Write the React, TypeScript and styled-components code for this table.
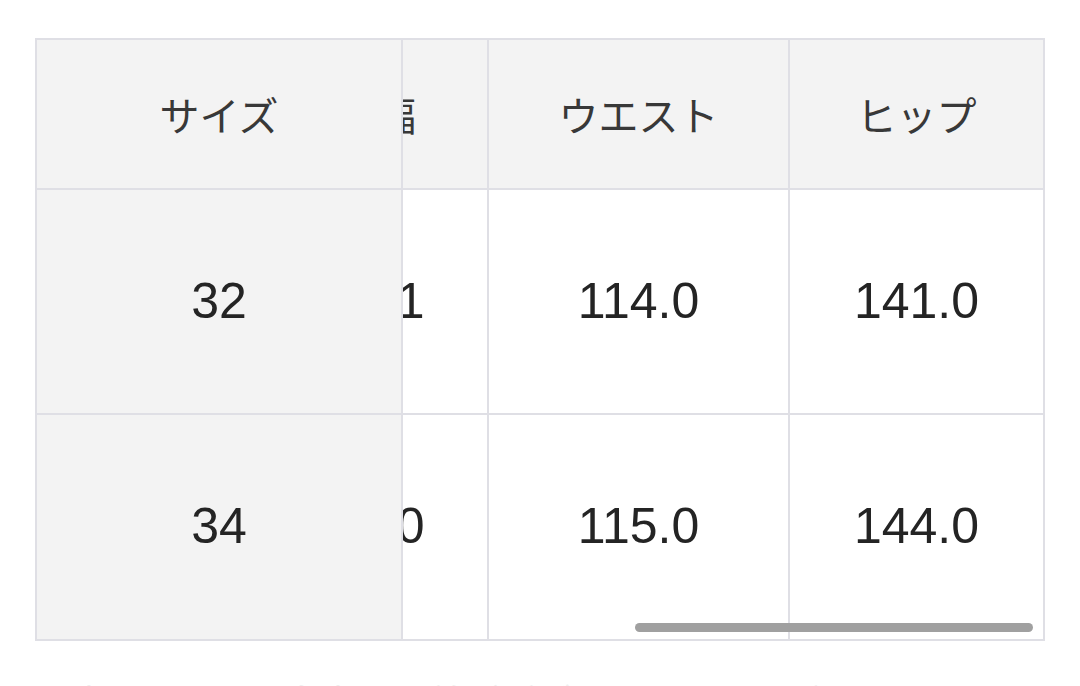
import React, { useLayoutEffect, useRef, useState } from "react"
import styled, { createGlobalStyle } from "styled-components"

const GlobalStyle = createGlobalStyle`
  html, body {
    margin: 0;
    padding: 0;
    background: #ffffff;
  }
  body {
    font-family: "Liberation Sans", "Noto Sans CJK JP", sans-serif;
    color: #2b2b2b;
  }
`

type Column = {
  label: string
  width: number
  values: string[]
}

const sizes = ["32", "34"]

const columns: Column[] = [
  { label: "総丈", width: 272, values: ["104.0", "106.0"] },
  { label: "股上", width: 272, values: ["36.0", "37.0"] },
  { label: "股下", width: 272, values: ["68.0", "69.0"] },
  { label: "渡り幅", width: 272, values: ["36.5", "37.5"] },
  { label: "膝幅", width: 272, values: ["29.0", "30.0"] },
  { label: "裾幅", width: 224, values: ["24.1", "25.0"] },
  { label: "ウエスト", width: 301, values: ["114.0", "115.0"] },
  { label: "ヒップ", width: 253, values: ["141.0", "144.0"] },
]

const STICKY_WIDTH = 366
const TRACK_INSET = 8

const App = () => {
  const boxRef = useRef<HTMLDivElement>(null)
  const [thumb, setThumb] = useState({ left: 0, width: 0 })

  useLayoutEffect(() => {
    const box = boxRef.current
    if (!box) return
    const update = () => {
      const track = box.clientWidth - TRACK_INSET * 2
      const width = (track * box.clientWidth) / box.scrollWidth
      const max = box.scrollWidth - box.clientWidth
      const left = TRACK_INSET + (max ? (box.scrollLeft / max) * (track - width) : 0)
      setThumb({ left, width })
    }
    box.scrollLeft = box.scrollWidth
    update()
    box.addEventListener("scroll", update)
    return () => box.removeEventListener("scroll", update)
  }, [])

  const tableWidth = STICKY_WIDTH + columns.reduce((sum, c) => sum + c.width, 0)

  return (
    <>
      <GlobalStyle />
      <Page>
        <Frame>
          <ScrollBox ref={boxRef}>
            <Table style={{ width: tableWidth }}>
              <colgroup>
                <col style={{ width: STICKY_WIDTH }} />
                {columns.map((c) => (
                  <col key={c.label} style={{ width: c.width }} />
                ))}
              </colgroup>
              <thead>
                <tr>
                  <HeadCell sticky>サイズ</HeadCell>
                  {columns.map((c, i) => (
                    <HeadCell key={c.label} last={i === columns.length - 1}>
                      {c.label}
                    </HeadCell>
                  ))}
                </tr>
              </thead>
              <tbody>
                {sizes.map((size, r) => (
                  <tr key={size}>
                    <BodyCell sticky bottom={r === sizes.length - 1}>
                      {size}
                    </BodyCell>
                    {columns.map((c, i) => (
                      <BodyCell
                        key={c.label}
                        last={i === columns.length - 1}
                        bottom={r === sizes.length - 1}
                      >
                        {c.values[r]}
                      </BodyCell>
                    ))}
                  </tr>
                ))}
              </tbody>
            </Table>
          </ScrollBox>
          <Thumb style={{ left: thumb.left, width: thumb.width }} />
        </Frame>
        <Note>※商品によって多少の誤差がございます。予めご了承ください。</Note>
      </Page>
    </>
  )
}

export default App

const Page = styled.div`
  padding: 38px 35px 0;
  height: 686px;
  box-sizing: border-box;
  overflow: hidden;
`

const Frame = styled.div`
  position: relative;
  width: 1010px;
`

const ScrollBox = styled.div`
  border: 2px solid #dfdfe5;
  overflow-x: auto;
  scrollbar-width: none;

  &::-webkit-scrollbar {
    display: none;
  }
`

const Table = styled.table`
  table-layout: fixed;
  border-collapse: separate;
  border-spacing: 0;
`

type CellProps = {
  sticky?: boolean
  last?: boolean
  bottom?: boolean
}

const HeadCell = styled.th<CellProps>`
  height: 150px;
  box-sizing: border-box;
  padding: 0;
  background: #f3f3f3;
  border-right: ${({ last }) => (last ? "none" : "2px solid #dfdfe5")};
  border-bottom: 2px solid #dfdfe5;
  font-family: "Noto Sans CJK JP", "Liberation Sans", sans-serif;
  font-size: 40px;
  font-weight: 400;
  color: #383838;
  text-align: center;
  white-space: nowrap;
  position: ${({ sticky }) => (sticky ? "sticky" : "static")};
  left: 0;
  z-index: ${({ sticky }) => (sticky ? 2 : "auto")};
`

const BodyCell = styled.td<CellProps>`
  height: ${({ bottom }) => (bottom ? "224px" : "225px")};
  box-sizing: border-box;
  padding: 0 0 2px;
  background: ${({ sticky }) => (sticky ? "#f3f3f3" : "#ffffff")};
  border-right: ${({ last }) => (last ? "none" : "2px solid #dfdfe5")};
  border-bottom: ${({ bottom }) => (bottom ? "none" : "2px solid #dfdfe5")};
  font-family: "Liberation Sans", "Noto Sans CJK JP", sans-serif;
  font-size: 50px;
  color: #242424;
  text-align: center;
  white-space: nowrap;
  position: ${({ sticky }) => (sticky ? "sticky" : "static")};
  left: 0;
  z-index: ${({ sticky }) => (sticky ? 2 : "auto")};
`

const Thumb = styled.div`
  position: absolute;
  bottom: 9px;
  height: 9px;
  border-radius: 5px;
  background: #a0a0a0;
  z-index: 3;
`

const Note = styled.p`
  margin: 33px 0 0;
  font-family: "Noto Sans CJK JP", sans-serif;
  font-size: 36px;
  color: #efefef;
  white-space: nowrap;
`
